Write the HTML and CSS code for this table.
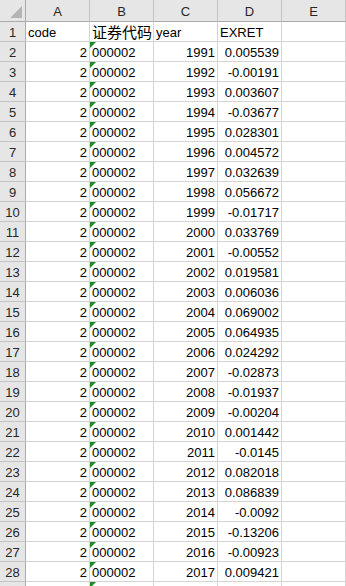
FILE: index.html
```html
<!DOCTYPE html>
<html lang="zh-CN">
<head>
<meta charset="utf-8">
<title>Sheet</title>
<link rel="stylesheet" href="styles.css">
</head>
<body>
<div class="sheet">
  <div class="hd corner"><span class="corner-tri"></span></div>
  <div class="hd col">A</div><div class="hd col">B</div><div class="hd col">C</div><div class="hd col">D</div><div class="hd col">E</div>

  <div class="hd row">1</div><div class="c">code</div><div class="c cjk">证券代码</div><div class="c">year</div><div class="c">EXRET</div><div class="c"></div>
  <div class="hd row">2</div><div class="c r">2</div><div class="c tx">000002</div><div class="c r">1991</div><div class="c r">0.005539</div><div class="c"></div>
  <div class="hd row">3</div><div class="c r">2</div><div class="c tx">000002</div><div class="c r">1992</div><div class="c r">-0.00191</div><div class="c"></div>
  <div class="hd row">4</div><div class="c r">2</div><div class="c tx">000002</div><div class="c r">1993</div><div class="c r">0.003607</div><div class="c"></div>
  <div class="hd row">5</div><div class="c r">2</div><div class="c tx">000002</div><div class="c r">1994</div><div class="c r">-0.03677</div><div class="c"></div>
  <div class="hd row">6</div><div class="c r">2</div><div class="c tx">000002</div><div class="c r">1995</div><div class="c r">0.028301</div><div class="c"></div>
  <div class="hd row">7</div><div class="c r">2</div><div class="c tx">000002</div><div class="c r">1996</div><div class="c r">0.004572</div><div class="c"></div>
  <div class="hd row">8</div><div class="c r">2</div><div class="c tx">000002</div><div class="c r">1997</div><div class="c r">0.032639</div><div class="c"></div>
  <div class="hd row">9</div><div class="c r">2</div><div class="c tx">000002</div><div class="c r">1998</div><div class="c r">0.056672</div><div class="c"></div>
  <div class="hd row">10</div><div class="c r">2</div><div class="c tx">000002</div><div class="c r">1999</div><div class="c r">-0.01717</div><div class="c"></div>
  <div class="hd row">11</div><div class="c r">2</div><div class="c tx">000002</div><div class="c r">2000</div><div class="c r">0.033769</div><div class="c"></div>
  <div class="hd row">12</div><div class="c r">2</div><div class="c tx">000002</div><div class="c r">2001</div><div class="c r">-0.00552</div><div class="c"></div>
  <div class="hd row">13</div><div class="c r">2</div><div class="c tx">000002</div><div class="c r">2002</div><div class="c r">0.019581</div><div class="c"></div>
  <div class="hd row">14</div><div class="c r">2</div><div class="c tx">000002</div><div class="c r">2003</div><div class="c r">0.006036</div><div class="c"></div>
  <div class="hd row">15</div><div class="c r">2</div><div class="c tx">000002</div><div class="c r">2004</div><div class="c r">0.069002</div><div class="c"></div>
  <div class="hd row">16</div><div class="c r">2</div><div class="c tx">000002</div><div class="c r">2005</div><div class="c r">0.064935</div><div class="c"></div>
  <div class="hd row">17</div><div class="c r">2</div><div class="c tx">000002</div><div class="c r">2006</div><div class="c r">0.024292</div><div class="c"></div>
  <div class="hd row">18</div><div class="c r">2</div><div class="c tx">000002</div><div class="c r">2007</div><div class="c r">-0.02873</div><div class="c"></div>
  <div class="hd row">19</div><div class="c r">2</div><div class="c tx">000002</div><div class="c r">2008</div><div class="c r">-0.01937</div><div class="c"></div>
  <div class="hd row">20</div><div class="c r">2</div><div class="c tx">000002</div><div class="c r">2009</div><div class="c r">-0.00204</div><div class="c"></div>
  <div class="hd row">21</div><div class="c r">2</div><div class="c tx">000002</div><div class="c r">2010</div><div class="c r">0.001442</div><div class="c"></div>
  <div class="hd row">22</div><div class="c r">2</div><div class="c tx">000002</div><div class="c r">2011</div><div class="c r">-0.0145</div><div class="c"></div>
  <div class="hd row">23</div><div class="c r">2</div><div class="c tx">000002</div><div class="c r">2012</div><div class="c r">0.082018</div><div class="c"></div>
  <div class="hd row">24</div><div class="c r">2</div><div class="c tx">000002</div><div class="c r">2013</div><div class="c r">0.086839</div><div class="c"></div>
  <div class="hd row">25</div><div class="c r">2</div><div class="c tx">000002</div><div class="c r">2014</div><div class="c r">-0.0092</div><div class="c"></div>
  <div class="hd row">26</div><div class="c r">2</div><div class="c tx">000002</div><div class="c r">2015</div><div class="c r">-0.13206</div><div class="c"></div>
  <div class="hd row">27</div><div class="c r">2</div><div class="c tx">000002</div><div class="c r">2016</div><div class="c r">-0.00923</div><div class="c"></div>
  <div class="hd row">28</div><div class="c r">2</div><div class="c tx">000002</div><div class="c r">2017</div><div class="c r">0.009421</div><div class="c"></div>
  <div class="hd row"></div><div class="c"></div><div class="c tx"></div><div class="c"></div><div class="c"></div><div class="c"></div>
</div>
</body>
</html>
```
FILE: styles.css
```css
html, body {
  margin: 0;
  padding: 0;
  background: #ffffff;
  overflow: hidden;
}

.sheet {
  display: grid;
  grid-template-columns: 26px repeat(5, 64px);
  grid-template-rows: 22px;
  grid-auto-rows: 20px;
  width: 346px;
  font-family: "Liberation Sans", "Noto Sans CJK SC", sans-serif;
  font-size: 13px;
  color: #000;
}

.c,
.hd {
  box-sizing: border-box;
  border-right: 1px solid #d4d4d4;
  border-bottom: 1px solid #d4d4d4;
  padding: 2px 2px 0 2px;
  line-height: 17px;
  white-space: nowrap;
  position: relative;
}

.r {
  text-align: right;
  padding-right: 2px;
}

.cjk {
  font-family: "Noto Sans CJK SC", sans-serif;
  font-size: 15px;
  padding-top: 0;
  line-height: 19px;
  overflow: visible;
  z-index: 1;
}

.tx::before {
  content: "";
  position: absolute;
  left: 0;
  top: 0;
  border-top: 6px solid #1f8a1f;
  border-right: 6px solid transparent;
}

.hd {
  background: #e6e6e6;
  color: #262626;
  text-align: center;
}

.col {
  border-right: 1px solid #c4c4c4;
  border-bottom: 1px solid #ababab;
  padding-top: 2px;
  line-height: 19px;
}

.row {
  border-right: 1px solid #ababab;
  border-bottom: 1px solid #c4c4c4;
}

.corner {
  border-right: 1px solid #ababab;
  border-bottom: 1px solid #ababab;
}

.corner-tri {
  position: absolute;
  right: 3px;
  bottom: 3px;
  width: 0;
  height: 0;
  border-left: 12px solid transparent;
  border-bottom: 12px solid #b4b4b4;
}
```
